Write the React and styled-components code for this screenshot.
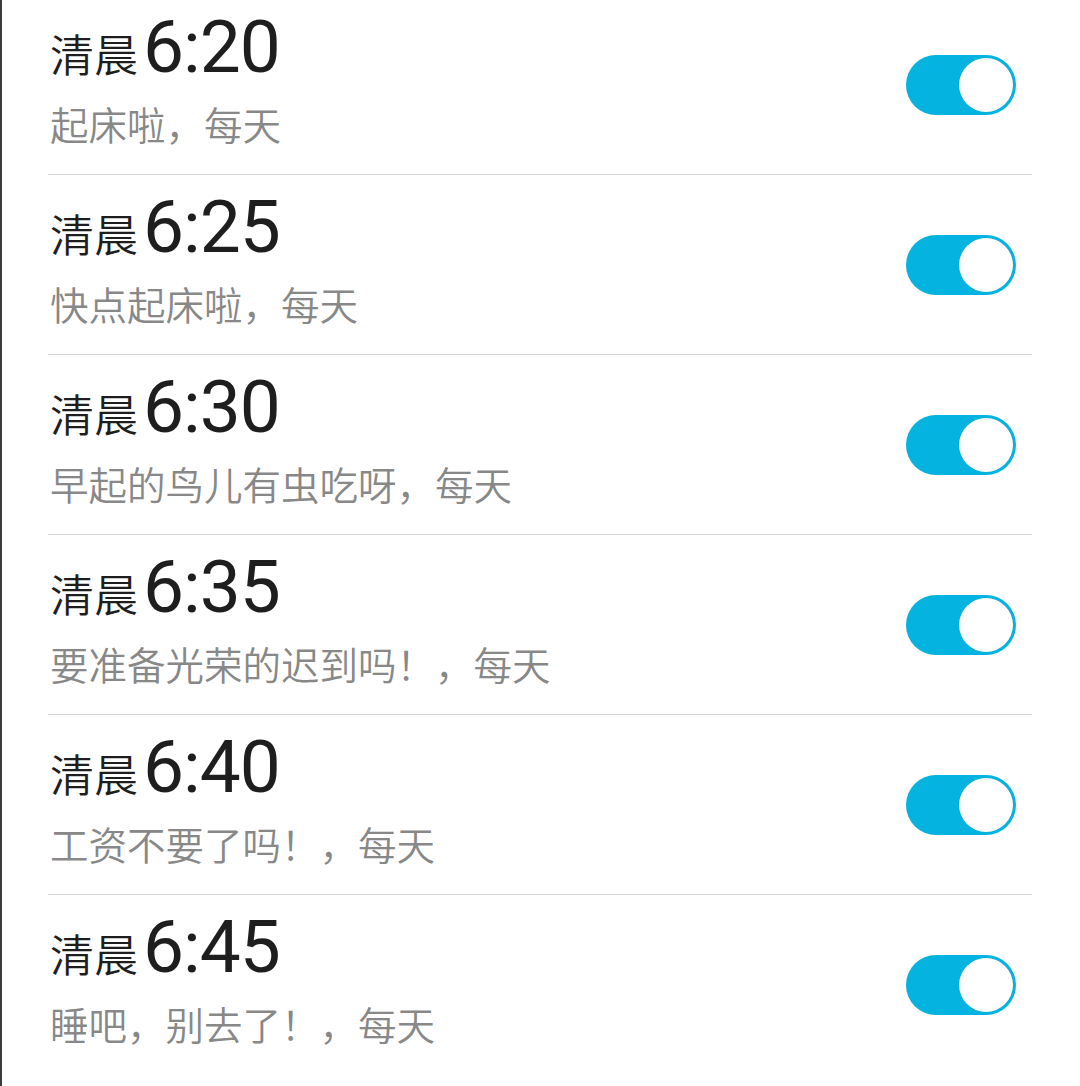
import React, { useState } from "react";
import styled, { createGlobalStyle } from "styled-components";

const GlobalStyle = createGlobalStyle`
  html, body {
    margin: 0;
    padding: 0;
    background: #ffffff;
  }
  body {
    font-family: "Noto Sans CJK SC", Roboto, sans-serif;
  }
`;

const Page = styled.div`
  min-height: 1086px;
  box-sizing: border-box;
  border-left: 2px solid #3c3c3c;
  background: #ffffff;
  overflow: hidden;
`;

const List = styled.ul`
  list-style: none;
  margin: -5px 0 0 46px;
  padding: 0;
  width: 984px;
`;

const Row = styled.li`
  box-sizing: border-box;
  height: 180px;
  display: flex;
  align-items: center;
  justify-content: space-between;
  padding-left: 2px;
  border-bottom: 1px solid #d6d6d6;
  &:last-child {
    border-bottom: none;
  }
`;

const TextBlock = styled.div`
  display: flex;
  flex-direction: column;
  align-self: flex-start;
  padding-top: 16px;
`;

const TitleLine = styled.div`
  display: flex;
  align-items: baseline;
`;

const Period = styled.span`
  font-family: "Noto Sans CJK SC", sans-serif;
  font-size: 44px;
  font-weight: 350;
  line-height: 1;
  color: #1e1e1e;
`;

const Time = styled.span`
  font-family: Roboto, "Noto Sans CJK SC", sans-serif;
  font-size: 73px;
  line-height: 1;
  letter-spacing: -1px;
  color: #1e1e1e;
  margin-left: 5px;
`;

const Label = styled.div`
  font-family: "Noto Sans CJK SC", sans-serif;
  font-size: 38.5px;
  font-weight: 350;
  line-height: 1;
  color: #888888;
  margin-top: 20px;
  white-space: nowrap;
`;

const Track = styled.button`
  position: relative;
  width: 110px;
  height: 60px;
  margin-right: 16px;
  border: none;
  padding: 0;
  border-radius: 30px;
  background: ${(p) => (p.$on ? "#05b3e1" : "#cfcfcf")};
  cursor: pointer;
  flex-shrink: 0;
`;

const Thumb = styled.span`
  position: absolute;
  top: 3px;
  left: ${(p) => (p.$on ? "53px" : "3px")};
  width: 54px;
  height: 54px;
  border-radius: 50%;
  background: #ffffff;
  box-shadow: 0 0 1px rgba(0, 120, 160, 0.4);
`;

const alarms = [
  { time: "6:20", label: "起床啦，每天" },
  { time: "6:25", label: "快点起床啦，每天" },
  { time: "6:30", label: "早起的鸟儿有虫吃呀，每天" },
  { time: "6:35", label: "要准备光荣的迟到吗！，每天" },
  { time: "6:40", label: "工资不要了吗！，每天" },
  { time: "6:45", label: "睡吧，别去了！，每天" },
];

function Toggle({ on, onClick }) {
  return (
    <Track $on={on} onClick={onClick} aria-pressed={on}>
      <Thumb $on={on} />
    </Track>
  );
}

export default function App() {
  const [states, setStates] = useState(alarms.map(() => true));
  const flip = (i) =>
    setStates((s) => s.map((v, j) => (j === i ? !v : v)));
  return (
    <>
      <GlobalStyle />
      <Page>
        <List>
          {alarms.map((a, i) => (
            <Row key={a.time}>
              <TextBlock>
                <TitleLine>
                  <Period>清晨</Period>
                  <Time>{a.time}</Time>
                </TitleLine>
                <Label>{a.label}</Label>
              </TextBlock>
              <Toggle on={states[i]} onClick={() => flip(i)} />
            </Row>
          ))}
        </List>
      </Page>
    </>
  );
}
